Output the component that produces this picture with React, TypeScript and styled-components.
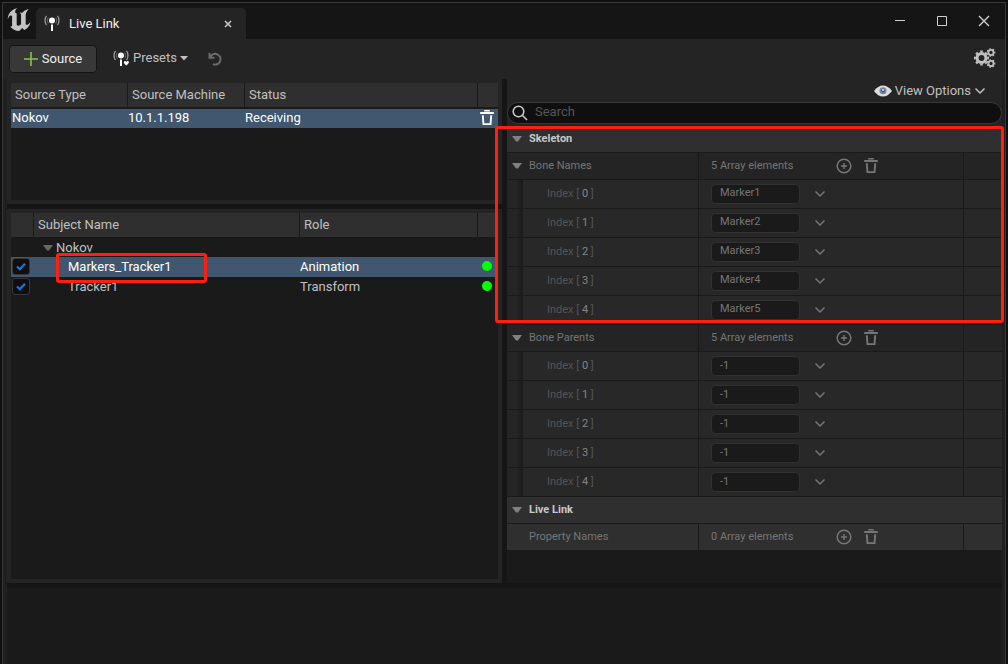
import React from 'react';
import styled, { createGlobalStyle, css } from 'styled-components';

const GlobalStyle = createGlobalStyle`
  *, *::before, *::after { box-sizing: border-box; }
  body { margin: 0; background: #111; }
  button, input { font: inherit; color: inherit; }
  button { background: none; border: 0; padding: 0; cursor: pointer; display: flex; align-items: center; }
  svg { display: block; flex: none; }
`;

const Page = styled.div`
  min-height: 100vh;
  padding: 2px 2px 0;
  display: flex;
  background: #101010;
  font-family: Roboto, 'Liberation Sans', sans-serif;
  font-size: 13px;
  line-height: 18px;
  color: #c0c0c0;
`;

const Frame = styled.div`
  flex: 1;
  min-width: 0;
  display: flex;
  flex-direction: column;
  border: 1px solid #383838;
  border-bottom: 0;
  background: #202020;
`;

const TitleBar = styled.header`
  height: 36px;
  display: flex;
  align-items: flex-end;
  background: #151515;
`;

const LogoBox = styled.div`
  align-self: center;
  padding: 0 5px 2px 4px;
`;

const Tab = styled.div`
  width: 210px;
  height: 31px;
  padding: 0 14px 0 8px;
  display: flex;
  align-items: center;
  gap: 8px;
  border-radius: 5px 5px 0 0;
  background: #242424;
  color: #f0f0f0;
`;

const TabLabel = styled.span`
  flex: 1;
`;

const WindowButtons = styled.div`
  margin-left: auto;
  align-self: center;
  display: flex;
  padding-right: 15px;
  gap: 30px;
  color: #d0d0d0;
`;

const Toolbar = styled.div`
  height: 40px;
  padding: 0 9px 0 6px;
  display: flex;
  align-items: center;
  background: #242424;
`;

const SourceButton = styled.button`
  && {
    height: 28px;
    width: 88px;
    gap: 4px;
    justify-content: center;
    border: 1px solid #141414;
    border-radius: 4px;
    background: #383838;
    color: #f0f0f0;
  }
`;

const PresetsButton = styled.button`
  && {
    margin: 0 20px 2px 16px;
    gap: 3px;
  }
`;

const SettingsButton = styled.button`
  && { margin: 0 0 2px auto; }
`;

const Panels = styled.main`
  flex: 1;
  margin: 0 3px 0 4px;
  display: grid;
  grid-template-columns: minmax(0, 1fr) minmax(0, 1fr);
  gap: 5px;
  background: #151515;
`;

const LeftColumn = styled.div`
  display: flex;
  flex-direction: column;
  gap: 5px;
`;

const ListPanel = styled.section<{ $grow?: boolean }>`
  padding: 4px;
  background: #242424;
  display: flex;
  ${(p) => (p.$grow ? css`flex: 1;` : css`height: 125px;`)}
`;

const ListBody = styled.div`
  flex: 1;
  min-width: 0;
  background: #1a1a1a;
`;

const Table = styled.table`
  width: 100%;
  table-layout: fixed;
  border-collapse: separate;
  border-spacing: 0;
`;

const Col = styled.col<{ $w?: number }>`
  ${(p) => p.$w && css`width: ${p.$w}px;`}
`;

const HeadCell = styled.th`
  height: 24px;
  padding: 0 4px;
  text-align: left;
  font-weight: 400;
  background: #2f2f2f;
  border-right: 1px solid #1a1a1a;
  &:last-child { border-right: 0; }
`;

const SourceHeadCell = styled(HeadCell)`
  height: 26px;
  border-bottom: 2px solid #1a1a1a;
`;

const Row = styled.tr<{ $selected?: boolean }>`
  ${(p) => p.$selected && css`background: #40576f; color: #fff;`}
`;

const Cell = styled.td<{ $h: number; $indent?: number }>`
  height: ${(p) => p.$h}px;
  padding: 0 0 2px ${(p) => p.$indent ?? 1}px;
  line-height: 17px;
  white-space: nowrap;
`;

const GroupCell = styled(Cell)`
  padding-bottom: 0;
`;

const NameCell = styled(Cell)`
  position: relative;
`;

const GroupLabel = styled.div`
  display: flex;
  align-items: center;
  gap: 3px;
  padding-top: 1px;
`;

const CheckLabel = styled.label`
  position: relative;
  display: block;
  width: 18px;
  height: 17px;
  svg { position: absolute; inset: 3px; pointer-events: none; }
`;

const CheckInput = styled.input`
  appearance: none;
  display: block;
  width: 18px;
  height: 17px;
  margin: 0;
  border: 1px solid #383838;
  border-radius: 3px;
  background: #0f0f0f;
`;

const StatusDot = styled.span`
  display: block;
  width: 10px;
  height: 10px;
  margin-left: 3px;
  border-radius: 50%;
  background: #00ff00;
`;

const Details = styled.section`
  background: #1a1a1a;
`;

const DetailsTop = styled.div`
  height: 47px;
  background: #242424;
  display: flex;
  flex-direction: column;
  justify-content: space-between;
  padding: 3px 0 2px;
`;

const ViewOptions = styled.button`
  && {
    align-self: flex-end;
    margin-right: 16px;
    gap: 3px;
  }
`;

const SearchBox = styled.label`
  height: 22px;
  padding: 0 4px;
  display: flex;
  align-items: center;
  gap: 7px;
  border: 1px solid #383838;
  border-radius: 11px;
  background: #0f0f0f;
`;

const SearchInput = styled.input`
  flex: 1;
  min-width: 0;
  height: 18px;
  padding: 0 0 2px;
  border: 0;
  outline: 0;
  background: transparent;
  &::placeholder { color: #565656; opacity: 1; }
`;

const PropertyGroup = styled.div`
  position: relative;
  font-size: 11px;
`;

const Category = styled.h2`
  height: 27px;
  margin: 0;
  padding: 0 5px;
  display: flex;
  align-items: center;
  gap: 7px;
  font-size: 11px;
  font-weight: 700;
  color: #c8c8c8;
  background: #2f2f2f;
  border-bottom: 1px solid #1a1a1a;
`;

const PropertyRow = styled.div<{ $item?: boolean; $light?: boolean }>`
  display: grid;
  grid-template-columns: minmax(0, 192fr) minmax(0, 265fr) 38px;
  height: ${(p) => (p.$item ? 29 : p.$light ? 26 : 27)}px;
  background: ${(p) => (p.$light ? '#2f2f2f' : p.$item ? '#282828' : '#242424')};
  border-bottom: ${(p) => (p.$light ? 0 : 1)}px solid #1a1a1a;
  color: #767676;
`;

const PropertyName = styled.div<{ $bare?: boolean }>`
  display: flex;
  align-items: center;
  gap: 7px;
  padding: 0 0 1px ${(p) => (p.$bare ? 22 : 5)}px;
  border-right: 1px solid #1a1a1a;
`;

const ItemName = styled.div`
  display: flex;
  align-items: center;
  border-right: 1px solid #1a1a1a;
  color: #545454;
  white-space: pre;
`;

const IndentShade = styled.span`
  align-self: stretch;
  width: 16px;
  margin-right: 24px;
  background: linear-gradient(90deg, #252525 60%, #1a1a1a);
`;

const IndexNumber = styled.span`
  color: #858585;
`;

const PropertyValue = styled.div`
  display: flex;
  align-items: center;
  padding-left: 12px;
  border-right: 1px solid #1a1a1a;
`;

const Count = styled.span`
  width: 125px;
  padding-bottom: 1px;
`;

const IconButton = styled.button`
  && { margin-right: 11px; color: #767676; }
`;

const ValueInput = styled.input<{ $raised?: boolean }>`
  width: 89px;
  height: 20px;
  margin-right: 14px;
  padding: 0 8px ${(p) => (p.$raised ? 3 : 1)}px;
  border: 1px solid #303030;
  border-radius: 4px;
  outline: 0;
  background: #1a1a1a;
`;

const BottomPanel = styled.footer`
  height: 81px;
  margin: 0 3px 0 4px;
  border-top: 5px solid #151515;
  background: #1a1a1a;
`;

const Highlight = styled.div`
  position: absolute;
  z-index: 2;
  border: 3px solid #ff2010;
  border-radius: 3px;
  pointer-events: none;
`;

const SkeletonHighlight = styled(Highlight)`
  inset: 0 -2px 2px -12px;
`;

const TrackerHighlight = styled(Highlight)`
  top: -4px;
  left: 22px;
  width: 151px;
  height: 30px;
`;

const Triangle = ({ color = '#808080' }: { color?: string }) => (
  <svg width="10" height="6" viewBox="0 0 10 6"><path d="M0 0h10L6 5.500H4z" fill={color} /></svg>
);

const Chevron = () => (
  <svg width="12" height="8" viewBox="0 0 12 8" fill="none" stroke="currentColor" strokeWidth="1.500">
    <path d="M1.500 1.500 6 6l4.500-4.500" />
  </svg>
);

const Trash = () => (
  <svg width="16" height="16" viewBox="0 0 16 16" fill="currentColor">
    <path d="M5.200 0h5.600v1.400H5.200zM1.200 2h13.600v2H1.200zM2.800 5.200h2l.5 8h5.400l.5-8h2l-.8 9.800H3.600z" />
  </svg>
);

const PlusCircle = () => (
  <svg width="16" height="16" viewBox="0 0 16 16" fill="none" stroke="currentColor" strokeWidth="1.500">
    <circle cx="8" cy="8" r="6.800" /><path d="M8 5v6M5 8h6" />
  </svg>
);

const Antenna = ({ badge }: { badge?: boolean }) => (
  <svg width="17" height="17" viewBox="0 0 17 17" fill="none">
    <circle cx="8" cy="5.500" r="3" fill="#fff" />
    <path d="M7 9.500h2V16H7z" fill="#fff" />
    <path d="M4.200 2.500C3.200 4 3.200 7 4.200 8.500M11.800 2.500c1 1.500 1 4.500 0 6" stroke="#666" />
    <path d="M2.500.8C.6 3 .6 8 2.500 10.200M13.500.8c1.900 2.200 1.900 7.200 0 9.400" stroke="#999" strokeWidth="1.300" />
    {badge && <path d="M11 11.500q1.200-1 2.300.2 1.200-1.200 2.500-.2.800 1.400-2.500 4-3.200-2.600-2.300-4z" fill="#fff" />}
  </svg>
);

const UnrealLogo = () => (
  <svg width="24" height="24" viewBox="4.200 5.200 15.200 14.300">
    <path
      fill="#c4c4c4"
      d="M19.130 13.729c-.206.997-1.126 3.557-4.060 4.942l-1.179-1.325-1.988 2a7.338 7.338 0 0 1-5.804-2.978 2.859 2.859 0 0 0 .65.123c.326.006.678-.114.678-.66v-5.394a.89.89 0 0 0-1.116-.89c-.92.212-1.656 2.509-1.656 2.509a7.304 7.304 0 0 1 2.528-5.597 7.408 7.408 0 0 1 3.730-1.721c-1.006.573-1.570 1.507-1.570 2.290 0 1.262.76 1.109.984.923v7.280a1.157 1.157 0 0 0 .148.256 1.075 1.075 0 0 0 .88.445c.76 0 1.747-.868 1.747-.868V9.172c0-.6-.452-1.324-.905-1.572 0 0 .838-.149 1.484.346a5.537 5.537 0 0 1 .387-.425c1.508-1.480 2.929-1.902 4.112-2.112 0 0-2.151 1.690-2.151 3.960 0 1.687.043 5.801.043 5.801.799.771 1.986-.342 3.059-1.441z"
    />
  </svg>
);

const Gear = ({ x, y, r, teeth }: { x: number; y: number; r: number; teeth: number }) => (
  <g fill="none" stroke="#c0c0c0">
    <circle cx={x} cy={y} r={r * 0.6} strokeWidth={r * 0.42} />
    <circle
      cx={x}
      cy={y}
      r={r * 0.88}
      strokeWidth={r * 0.26}
      pathLength={teeth * 2}
      strokeDasharray="1 1"
      strokeDashoffset="0.5"
    />
  </g>
);

const Gears = () => (
  <svg width="22" height="20" viewBox="0 0 22 20">
    <Gear x={7.5} y={10} r={7.5} teeth={8} />
    <Gear x={17} y={4.5} r={4.3} teeth={7} />
    <Gear x={17} y={15.5} r={4.3} teeth={7} />
  </svg>
);

const Eye = () => (
  <svg width="18" height="12" viewBox="0 0 18 12">
    <path d="M0 6Q4 .5 9 .5T18 6q-4 5.500-9 5.500T0 6z" fill="#dcdcdc" />
    <circle cx="9" cy="5.800" r="3.500" fill="#7487a8" />
    <circle cx="9" cy="5.800" r="1.800" fill="#44567a" />
    <circle cx="9" cy="5" r="1" fill="#dce4f0" />
  </svg>
);

const Check = () => (
  <svg width="11" height="11" viewBox="0 0 11 11" fill="none" stroke="#0e78ee" strokeWidth="2.200">
    <path d="M2 5.500 4.800 8.200 10 2.800" />
  </svg>
);

const ArrayHeader = ({ name, count, bare }: { name: string; count: number; bare?: boolean }) => (
  <PropertyRow $light={bare}>
    <PropertyName $bare={bare}>
      {!bare && <Triangle />}
      {name}
    </PropertyName>
    <PropertyValue>
      <Count>{count} Array elements</Count>
      <IconButton aria-label={`Add to ${name}`}><PlusCircle /></IconButton>
      <IconButton aria-label={`Empty ${name}`}><Trash /></IconButton>
    </PropertyValue>
  </PropertyRow>
);

const ArrayItems = ({ name, values, raised }: { name: string; values: string[]; raised?: boolean }) => (
  <>
    {values.map((value, i) => (
      <PropertyRow key={i} $item>
        <ItemName>
          <IndentShade />
          Index [ <IndexNumber>{i}</IndexNumber> ]
        </ItemName>
        <PropertyValue>
          <ValueInput aria-label={`${name} ${i}`} defaultValue={value} $raised={raised} />
          <IconButton aria-label={`${name} ${i} menu`}><Chevron /></IconButton>
        </PropertyValue>
      </PropertyRow>
    ))}
  </>
);

const subjects = [
  { name: 'Markers_Tracker1', role: 'Animation', selected: true },
  { name: 'Tracker1', role: 'Transform', selected: false },
];

export default function App() {
  return (
    <Page>
      <GlobalStyle />
      <Frame>
        <TitleBar>
          <LogoBox><UnrealLogo /></LogoBox>
          <Tab>
            <Antenna />
            <TabLabel>Live Link</TabLabel>
            <button aria-label="Close tab">
              <svg width="8" height="8" viewBox="0 0 8 8" stroke="#c8c8c8" strokeWidth="1.600"><path d="m1 1 6 6M7 1 1 7" /></svg>
            </button>
          </Tab>
          <WindowButtons>
            <button aria-label="Minimize">
              <svg width="12" height="12" viewBox="0 0 12 12" stroke="currentColor"><path d="M1 5.500h10" /></svg>
            </button>
            <button aria-label="Maximize">
              <svg width="12" height="12" viewBox="0 0 12 12" fill="none" stroke="currentColor"><path d="M1.500 1.500h9v9h-9z" /></svg>
            </button>
            <button aria-label="Close">
              <svg width="12" height="12" viewBox="0 0 12 12" stroke="currentColor" strokeWidth="1.400"><path d="m1 1 10 10M11 1 1 11" /></svg>
            </button>
          </WindowButtons>
        </TitleBar>

        <Toolbar>
          <SourceButton>
            <svg width="14" height="14" viewBox="0 0 14 14" stroke="#8bc24a" strokeWidth="1.600"><path d="M7 0v14M0 7h14" /></svg>
            Source
          </SourceButton>
          <PresetsButton>
            <Antenna badge />
            <span>Presets</span>
            <svg width="8" height="5" viewBox="0 0 8 5"><path d="M0 0h8L4 4.500z" fill="#c0c0c0" /></svg>
          </PresetsButton>
          <button aria-label="Revert changes">
            <svg width="15" height="14" viewBox="0 0 15 14" fill="none" stroke="#6c6c6c" strokeWidth="1.900">
              <path d="M1.500 1v4.800h5" />
              <path d="M2.200 5A5.400 5.400 0 1 1 5 12.200" />
            </svg>
          </button>
          <SettingsButton aria-label="Settings"><Gears /></SettingsButton>
        </Toolbar>

        <Panels>
          <LeftColumn>
            <ListPanel>
              <ListBody>
                <Table>
                  <colgroup><Col $w={117} /><Col $w={117} /><Col /><Col $w={20} /></colgroup>
                  <thead>
                    <tr>
                      <SourceHeadCell>Source Type</SourceHeadCell>
                      <SourceHeadCell>Source Machine</SourceHeadCell>
                      <SourceHeadCell>Status</SourceHeadCell>
                      <SourceHeadCell />
                    </tr>
                  </thead>
                  <tbody>
                    <Row $selected>
                      <Cell $h={19}>Nokov</Cell>
                      <Cell $h={19} $indent={0}>10.1.1.198</Cell>
                      <Cell $h={19} $indent={0}>Receiving</Cell>
                      <Cell $h={19}><button aria-label="Remove source"><Trash /></button></Cell>
                    </Row>
                  </tbody>
                </Table>
              </ListBody>
            </ListPanel>
            <ListPanel $grow>
              <ListBody>
                <Table>
                  <colgroup><Col $w={23} /><Col /><Col $w={178} /><Col $w={20} /></colgroup>
                  <thead>
                    <tr>
                      <HeadCell />
                      <HeadCell>Subject Name</HeadCell>
                      <HeadCell>Role</HeadCell>
                      <HeadCell />
                    </tr>
                  </thead>
                  <tbody>
                    <Row>
                      <GroupCell $h={20} />
                      <GroupCell $h={20} $indent={9}>
                        <GroupLabel><Triangle color="#686868" />Nokov</GroupLabel>
                      </GroupCell>
                      <GroupCell $h={20} />
                      <GroupCell $h={20} />
                    </Row>
                    {subjects.map((s) => (
                      <Row key={s.name} $selected={s.selected}>
                        <Cell $h={20}>
                          <CheckLabel>
                            <CheckInput type="checkbox" defaultChecked aria-label={`Enable ${s.name}`} />
                            <Check />
                          </CheckLabel>
                        </Cell>
                        <NameCell $h={20} $indent={34}>
                          {s.name}
                          {s.selected && <TrackerHighlight />}
                        </NameCell>
                        <Cell $h={20} $indent={0}>{s.role}</Cell>
                        <Cell $h={20}><StatusDot /></Cell>
                      </Row>
                    ))}
                  </tbody>
                </Table>
              </ListBody>
            </ListPanel>
          </LeftColumn>

          <Details>
            <DetailsTop>
              <ViewOptions><Eye />View Options<Chevron /></ViewOptions>
              <SearchBox>
                <svg width="16" height="16" viewBox="0 0 16 16" fill="none" stroke="#c8c8c8" strokeWidth="1.600">
                  <circle cx="6.500" cy="6.500" r="5.300" /><path d="m10.300 10.300 4.700 4.700" />
                </svg>
                <SearchInput type="text" placeholder="Search" aria-label="Search" />
              </SearchBox>
            </DetailsTop>
            <PropertyGroup>
              <Category><Triangle />Skeleton</Category>
              <ArrayHeader name="Bone Names" count={5} />
              <ArrayItems name="Bone Names" values={['Marker1', 'Marker2', 'Marker3', 'Marker4', 'Marker5']} raised />
              <SkeletonHighlight />
            </PropertyGroup>
            <PropertyGroup>
              <ArrayHeader name="Bone Parents" count={5} />
              <ArrayItems name="Bone Parents" values={['-1', '-1', '-1', '-1', '-1']} />
            </PropertyGroup>
            <PropertyGroup>
              <Category><Triangle />Live Link</Category>
              <ArrayHeader name="Property Names" count={0} bare />
            </PropertyGroup>
          </Details>
        </Panels>
        <BottomPanel />
      </Frame>
    </Page>
  );
}
